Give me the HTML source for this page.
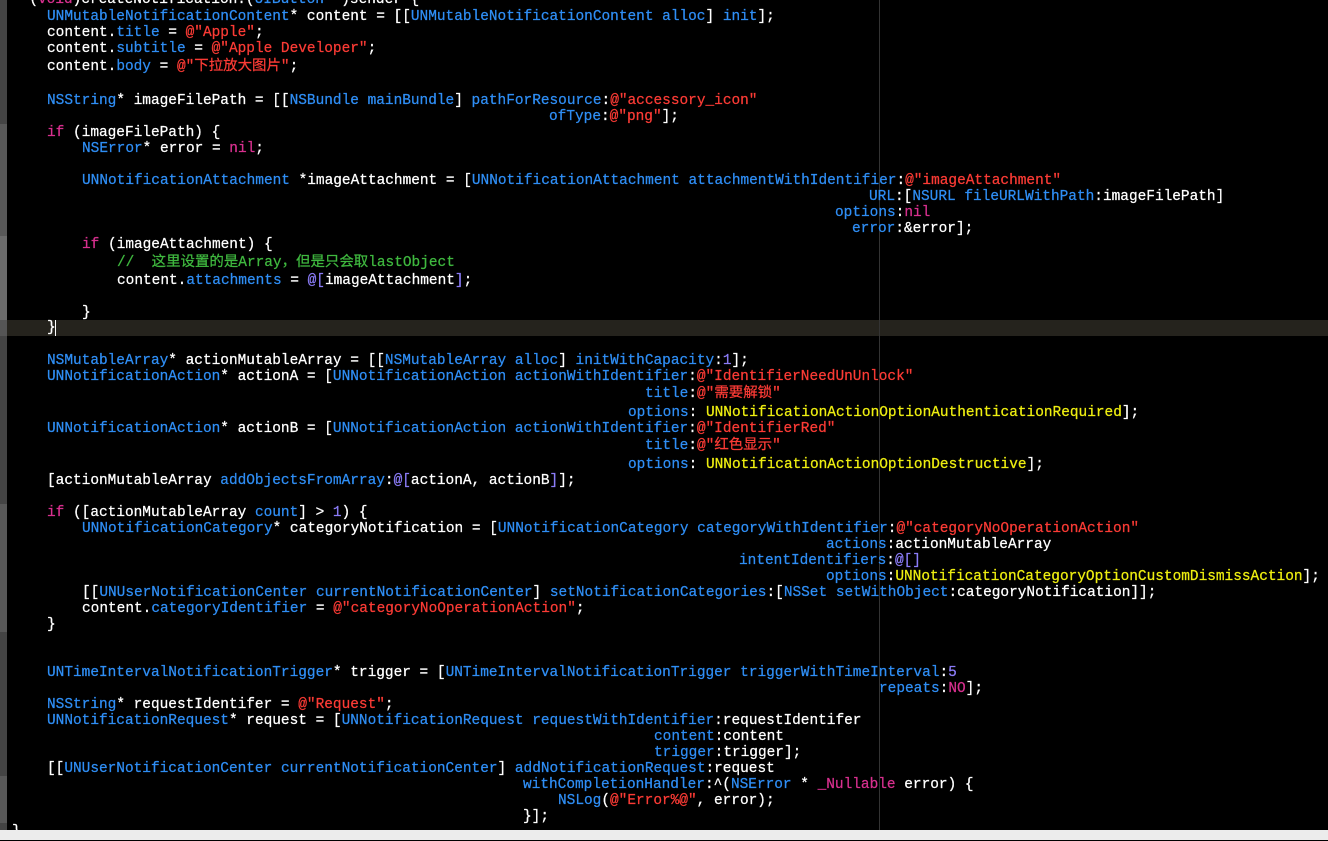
<!DOCTYPE html>
<html><head><meta charset="utf-8"><style>
html,body{margin:0;padding:0;}
body{width:1328px;height:840px;background:#000;position:relative;overflow:hidden;font-family:"Liberation Mono","Noto Sans CJK SC",monospace;font-size:14.45px;color:#fff;}
.w{position:absolute;left:0;top:1px;width:1328px;height:840px;}
.l{position:absolute;white-space:pre;line-height:16px;height:16px;-webkit-text-stroke:0.25px currentColor;}
.t{color:#2f8ef5}.s{color:#fb3b35}.k{color:#d8308f}.c{color:#3fb83f}.y{color:#eeee10}.n{color:#8b7cf7}
.g{position:absolute;left:0;width:7px;}
</style></head><body>
<div class="g" style="top:0;height:124px;background:#444"></div>
<div class="g" style="top:124px;height:112px;background:#585858"></div>
<div class="g" style="top:236px;height:84px;background:#6b6b6b"></div>
<div class="g" style="top:320px;height:16px;background:#555"></div>
<div class="g" style="top:336px;height:168px;background:#444"></div>
<div class="g" style="top:504px;height:128px;background:#585858"></div>
<div class="g" style="top:632px;height:144px;background:#444"></div>
<div class="g" style="top:776px;height:47px;background:#585858"></div>
<div class="g" style="top:823px;height:7px;background:#444"></div>
<div style="position:absolute;left:7px;right:0;top:320px;height:16px;background:#25231d"></div>
<div style="position:absolute;left:879px;top:0;width:1px;height:830px;background:#333"></div>
<div style="position:absolute;left:55px;top:320px;width:1px;height:16px;background:#fff"></div>
<div class="w">
<div class="l" style="left:12px;top:-9px">- (<span class="k">void</span>)createNotification:(<span class="t">UIButton</span> *)sender {</div>
<div class="l" style="left:47px;top:8px"><span class="t">UNMutableNotificationContent</span>* content = [[<span class="t">UNMutableNotificationContent</span> <span class="t">alloc</span>] <span class="t">init</span>];</div>
<div class="l" style="left:47px;top:24px">content.<span class="t">title</span> = <span class="s">@"Apple"</span>;</div>
<div class="l" style="left:47px;top:40px">content.<span class="t">subtitle</span> = <span class="s">@"Apple Developer"</span>;</div>
<div class="l" style="left:47px;top:58px">content.<span class="t">body</span> = <span class="s">@"下拉放大图片"</span>;</div>
<div class="l" style="left:47px;top:92px"><span class="t">NSString</span>* imageFilePath = [[<span class="t">NSBundle</span> <span class="t">mainBundle</span>] <span class="t">pathForResource</span>:<span class="s">@"accessory_icon"</span></div>
<div class="l" style="left:549px;top:108px"><span class="t">ofType</span>:<span class="s">@"png"</span>];</div>
<div class="l" style="left:47px;top:124px"><span class="k">if</span> (imageFilePath) {</div>
<div class="l" style="left:82px;top:140px"><span class="t">NSError</span>* error = <span class="k">nil</span>;</div>
<div class="l" style="left:82px;top:172px"><span class="t">UNNotificationAttachment</span> *imageAttachment = [<span class="t">UNNotificationAttachment</span> <span class="t">attachmentWithIdentifier</span>:<span class="s">@"imageAttachment"</span></div>
<div class="l" style="left:869px;top:188px"><span class="t">URL</span>:[<span class="t">NSURL</span> <span class="t">fileURLWithPath</span>:imageFilePath]</div>
<div class="l" style="left:835px;top:204px"><span class="t">options</span>:<span class="k">nil</span></div>
<div class="l" style="left:852px;top:220px"><span class="t">error</span>:&amp;error];</div>
<div class="l" style="left:82px;top:236px"><span class="k">if</span> (imageAttachment) {</div>
<div class="l" style="left:117px;top:254px"><span class="c">//  这里设置的是Array，但是只会取lastObject</span></div>
<div class="l" style="left:117px;top:272px">content.<span class="t">attachments</span> = <span class="n">@[</span>imageAttachment<span class="n">]</span>;</div>
<div class="l" style="left:82px;top:304px">}</div>
<div class="l" style="left:47px;top:319px">}</div>
<div class="l" style="left:47px;top:352px"><span class="t">NSMutableArray</span>* actionMutableArray = [[<span class="t">NSMutableArray</span> <span class="t">alloc</span>] <span class="t">initWithCapacity</span>:<span class="n">1</span>];</div>
<div class="l" style="left:47px;top:368px"><span class="t">UNNotificationAction</span>* actionA = [<span class="t">UNNotificationAction</span> <span class="t">actionWithIdentifier</span>:<span class="s">@"IdentifierNeedUnUnlock"</span></div>
<div class="l" style="left:645px;top:385px"><span class="t">title</span>:<span class="s">@"需要解锁"</span></div>
<div class="l" style="left:628px;top:404px"><span class="t">options</span>: <span class="y">UNNotificationActionOptionAuthenticationRequired</span>];</div>
<div class="l" style="left:47px;top:420px"><span class="t">UNNotificationAction</span>* actionB = [<span class="t">UNNotificationAction</span> <span class="t">actionWithIdentifier</span>:<span class="s">@"IdentifierRed"</span></div>
<div class="l" style="left:645px;top:437px"><span class="t">title</span>:<span class="s">@"红色显示"</span></div>
<div class="l" style="left:628px;top:456px"><span class="t">options</span>: <span class="y">UNNotificationActionOptionDestructive</span>];</div>
<div class="l" style="left:47px;top:472px">[actionMutableArray <span class="t">addObjectsFromArray</span>:<span class="n">@[</span>actionA, actionB<span class="n">]</span>];</div>
<div class="l" style="left:47px;top:504px"><span class="k">if</span> ([actionMutableArray <span class="t">count</span>] &gt; <span class="n">1</span>) {</div>
<div class="l" style="left:82px;top:520px"><span class="t">UNNotificationCategory</span>* categoryNotification = [<span class="t">UNNotificationCategory</span> <span class="t">categoryWithIdentifier</span>:<span class="s">@"categoryNoOperationAction"</span></div>
<div class="l" style="left:826px;top:536px"><span class="t">actions</span>:actionMutableArray</div>
<div class="l" style="left:739px;top:552px"><span class="t">intentIdentifiers</span>:<span class="n">@[]</span></div>
<div class="l" style="left:826px;top:568px"><span class="t">options</span>:<span class="y">UNNotificationCategoryOptionCustomDismissAction</span>];</div>
<div class="l" style="left:82px;top:584px">[[<span class="t">UNUserNotificationCenter</span> <span class="t">currentNotificationCenter</span>] <span class="t">setNotificationCategories</span>:[<span class="t">NSSet</span> <span class="t">setWithObject</span>:categoryNotification]];</div>
<div class="l" style="left:82px;top:600px">content.<span class="t">categoryIdentifier</span> = <span class="s">@"categoryNoOperationAction"</span>;</div>
<div class="l" style="left:47px;top:616px">}</div>
<div class="l" style="left:47px;top:664px"><span class="t">UNTimeIntervalNotificationTrigger</span>* trigger = [<span class="t">UNTimeIntervalNotificationTrigger</span> <span class="t">triggerWithTimeInterval</span>:<span class="n">5</span></div>
<div class="l" style="left:879px;top:680px"><span class="t">repeats</span>:<span class="k">NO</span>];</div>
<div class="l" style="left:47px;top:696px"><span class="t">NSString</span>* requestIdentifer = <span class="s">@"Request"</span>;</div>
<div class="l" style="left:47px;top:712px"><span class="t">UNNotificationRequest</span>* request = [<span class="t">UNNotificationRequest</span> <span class="t">requestWithIdentifier</span>:requestIdentifer</div>
<div class="l" style="left:654px;top:728px"><span class="t">content</span>:content</div>
<div class="l" style="left:654px;top:744px"><span class="t">trigger</span>:trigger];</div>
<div class="l" style="left:47px;top:760px">[[<span class="t">UNUserNotificationCenter</span> <span class="t">currentNotificationCenter</span>] <span class="t">addNotificationRequest</span>:request</div>
<div class="l" style="left:523px;top:776px"><span class="t">withCompletionHandler</span>:^(<span class="t">NSError</span> * <span class="k">_Nullable</span> error) {</div>
<div class="l" style="left:558px;top:792px"><span class="t">NSLog</span>(<span class="s">@"Error%@"</span>, error);</div>
<div class="l" style="left:523px;top:808px">}];</div>
<div class="l" style="left:12px;top:823px">}</div>
</div>
<div style="position:absolute;left:0;top:830px;width:1328px;height:10px;background:#ececec"></div>
</body></html>
